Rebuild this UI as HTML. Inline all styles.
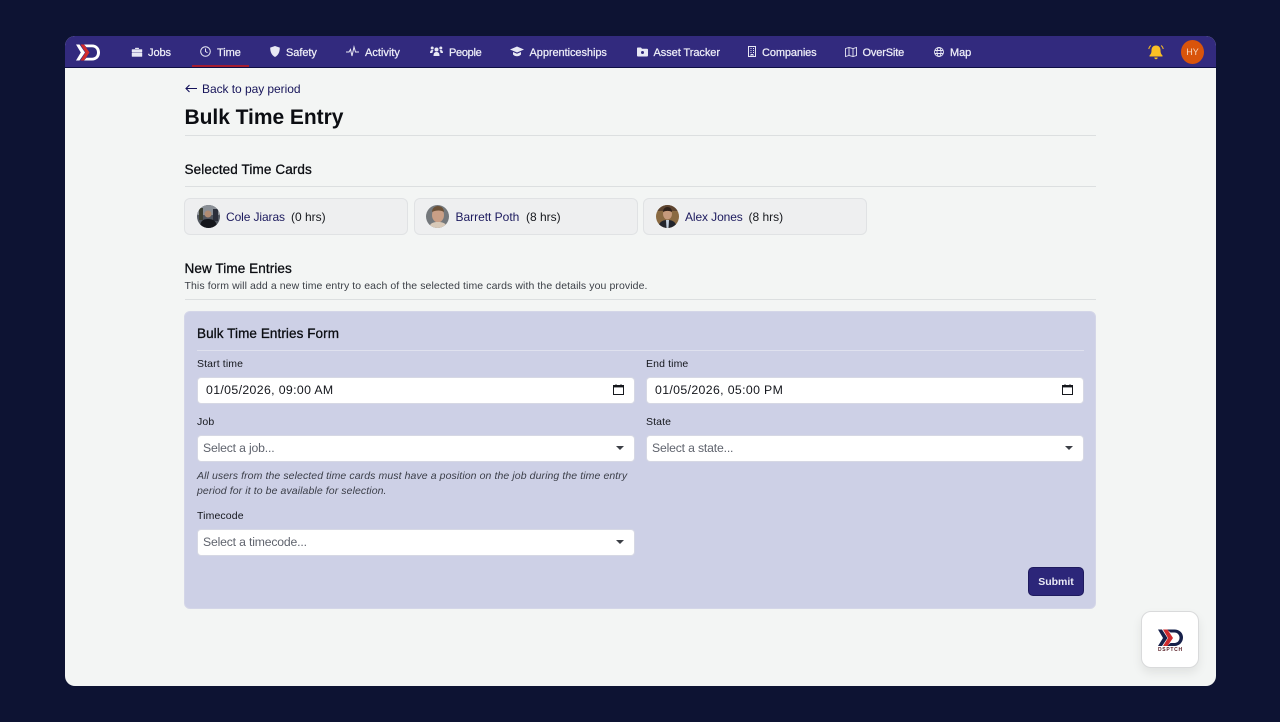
<!DOCTYPE html>
<html><head><meta charset="utf-8"><style>
*{box-sizing:border-box}
html,body{margin:0;padding:0}
body{width:1280px;height:722px;background:#0d1333;font-family:"Liberation Sans",sans-serif;position:relative;overflow:hidden;color:#0c0f14}
.a{position:absolute;white-space:nowrap}
#page{position:absolute;left:65px;top:36px;width:1151px;height:650px;background:#f3f5f4;border-radius:10px;overflow:hidden}
#nav{position:absolute;left:65px;top:36px;width:1151px;height:32px;background:#322a7e;border-radius:10px 10px 0 0;border-bottom:1px solid #0e0e45}
.n{position:absolute;top:47px;font-size:11px;line-height:12px;font-weight:400;color:#eeeef8;white-space:nowrap;letter-spacing:-.06px;-webkit-text-stroke:.25px #eeeef8}
svg.i{position:absolute;overflow:visible}
.hr{position:absolute;height:1px;background:#dcdfe0}
.card{position:absolute;top:198px;width:224px;height:37px;background:#eeeff0;border:1px solid #e0e2e4;border-radius:6px}
.av{position:absolute;top:205px;width:23px;height:23px;border-radius:50%;overflow:hidden}
.nm{position:absolute;top:210px;font-size:12px;line-height:15px;color:#1c1a5e;white-space:nowrap;letter-spacing:-.1px}
.hrs{position:absolute;top:210px;font-size:12px;line-height:15px;color:#16181d;white-space:nowrap}
.lab{position:absolute;font-size:10.5px;line-height:12px;color:#14161c;white-space:nowrap;letter-spacing:.12px}
.inp{position:absolute;width:437.5px;height:27px;background:#fff;border:1px solid #d6d8e4;border-radius:4px}
.val{position:absolute;font-size:12.3px;line-height:15px;color:#14161c;white-space:nowrap;letter-spacing:.36px}
.ph{position:absolute;font-size:12.2px;line-height:15px;color:#5f636d;white-space:nowrap;letter-spacing:-.16px}
.car{position:absolute;width:0;height:0;border-left:4px solid transparent;border-right:4px solid transparent;border-top:4px solid #3c3f46}
</style></head><body>
<div id="page"></div>
<div id="nav"></div>
<div class="a" style="left:192px;top:65px;width:57px;height:2px;background:#a51c30"></div>

<!-- logo -->
<svg class="i" style="left:76px;top:44px" width="24" height="17" viewBox="0 0 24 17">
<path d="M8 .5h8c5 0 8 3.500 8 8s-3 8-8 8H8l2.500-2.800h5.500c3.200 0 5-2.200 5-5.200s-1.800-5.200-5-5.200h-5.500z" fill="#fff"/>
<path d="M0 .5h3.500L9 8.500 3.500 16.500H0l4.800-8z" fill="#fff"/>
<path d="M4.500 .5h3.500l5.500 8-5.500 8H4.500l5-8z" fill="#d32b2b"/>
</svg>

<!-- Jobs icon -->
<svg class="i" style="left:132px;top:47px" width="10" height="10" viewBox="0 0 10 10"><path d="M3.300 2V1h3.400v1M0 2.500h10V5H0zM0 5.800h10v3.700H0z" fill="#e8e8f4" stroke="#e8e8f4" stroke-width=".4"/></svg>
<div class="n" style="left:148px">Jobs</div>
<!-- Time icon -->
<svg class="i" style="left:200px;top:46px" width="11" height="11" viewBox="0 0 11 11" fill="none" stroke="#e8e8f4" stroke-width="1"><circle cx="5.500" cy="5.500" r="4.800"/><path d="M5.500 2.500v3l2 1.200"/></svg>
<div class="n" style="left:217px">Time</div>
<!-- Safety -->
<svg class="i" style="left:270px;top:46px" width="10" height="11" viewBox="0 0 10 11"><path d="M5 0l4.800 1.600c0 4.400-1.400 7.400-4.800 9.400C1.600 9 .2 6 .2 1.600z" fill="#e8e8f4"/></svg>
<div class="n" style="left:286px">Safety</div>
<!-- Activity -->
<svg class="i" style="left:346px;top:46px" width="13" height="11" viewBox="0 0 13 11" fill="none" stroke="#e8e8f4" stroke-width="1"><path d="M0 6h3l1.500-2.500L6 10l2-9 1.500 5H13"/></svg>
<div class="n" style="left:365px;letter-spacing:0">Activity</div>
<!-- People -->
<svg class="i" style="left:430px;top:46px" width="13" height="11" viewBox="0 0 13 11" fill="#e8e8f4"><circle cx="6.500" cy="3.500" r="2"/><circle cx="2.200" cy="2" r="1.500"/><circle cx="10.800" cy="2" r="1.500"/><path d="M3.500 10c0-3 1-4 3-4s3 1 3 4zM0 7c0-2 1-3 2.200-3 .5 0 1 .2 1.300.5C2.800 5.200 2.500 6 2.400 7zM13 7c0-2-1-3-2.200-3-.5 0-1 .2-1.300.5.700.7 1 1.500 1.100 2.500z"/></svg>
<div class="n" style="left:449px;letter-spacing:-.3px">People</div>
<!-- Apprenticeships -->
<svg class="i" style="left:510px;top:46px" width="14" height="11" viewBox="0 0 14 11" fill="#e8e8f4"><path d="M7 .5L14 3.500 7 6.500 0 3.500z"/><path d="M3 6v2.500C4 9.700 5.500 10.300 7 10.300s3-.6 4-1.800V6L7 7.700z"/></svg>
<div class="n" style="left:529.500px">Apprenticeships</div>
<!-- Asset tracker -->
<svg class="i" style="left:637px;top:47px" width="11" height="10" viewBox="0 0 11 10"><path d="M0 1.500C0 .8.400.5 1 .5h3l1 1.200h5c.6 0 1 .4 1 1V8.500c0 .6-.4 1-1 1H1c-.6 0-1-.4-1-1z" fill="#e8e8f4"/><circle cx="5.500" cy="5.500" r="1.500" fill="#322a7e"/></svg>
<div class="n" style="left:653.500px">Asset Tracker</div>
<!-- Companies -->
<svg class="i" style="left:748px;top:46px" width="9" height="11" viewBox="0 0 9 11" fill="none" stroke="#e8e8f4"><rect x=".5" y=".5" width="7" height="10"/><path d="M2.500 2.500h1M5 2.500h1M2.500 4.500h1M5 4.500h1M2.500 6.500h1M5 6.500h1M3 10.500V8.500h2v2" stroke-width=".9"/></svg>
<div class="n" style="left:762px;letter-spacing:-.12px">Companies</div>
<!-- OverSite -->
<svg class="i" style="left:845px;top:47px" width="12" height="10" viewBox="0 0 12 10" fill="none" stroke="#e8e8f4" stroke-width=".9"><path d="M.5 1.500L4 .5l4 1 3.500-1v8L8 9.500l-4-1-3.500 1zM4 .5v8M8 1.500v8"/></svg>
<div class="n" style="left:862.500px;letter-spacing:-.15px">OverSite</div>
<!-- Map -->
<svg class="i" style="left:934px;top:47px" width="10" height="10" viewBox="0 0 10 10" fill="none" stroke="#e8e8f4" stroke-width=".9"><circle cx="5" cy="5" r="4.500"/><ellipse cx="5" cy="5" rx="2" ry="4.500"/><path d="M.5 3.500h9M.5 6.500h9"/></svg>
<div class="n" style="left:950px">Map</div>

<!-- bell -->
<svg class="i" style="left:1148px;top:44px" width="16" height="16" viewBox="0 0 16 16"><path d="M8 1.500c2.800 0 4.500 2 4.500 4.800 0 2.500.5 3.800 2 5.200v1H1.500v-1c1.500-1.400 2-2.700 2-5.200C3.500 3.500 5.200 1.500 8 1.500z" fill="#fbbf24"/><path d="M6.300 13.500h3.400c0 1-.7 1.700-1.700 1.700s-1.700-.7-1.700-1.700z" fill="#fbbf24"/><path d="M2.800 1.500C1.600 2.500 1 3.700.8 5.100M13.200 1.500c1.200 1 1.800 2.200 2 3.600" fill="none" stroke="#fbbf24" stroke-width="1"/></svg>
<!-- HY -->
<div class="a" style="left:1181px;top:40px;width:23px;height:24px;border-radius:50%;background:#d9540b;color:#f6d9c4;font-size:9px;line-height:24px;text-align:center">HY</div>

<!-- Header -->
<svg class="i" style="left:185px;top:84px" width="12" height="9" viewBox="0 0 12 9" fill="none" stroke="#14125a" stroke-width="1.100"><path d="M12 4.500H1M4.500 1L1 4.500 4.500 8"/></svg>
<div class="a" style="left:202px;top:82px;font-size:12px;line-height:15px;color:#17155a;letter-spacing:-.05px">Back to pay period</div>
<div class="a" style="left:184.500px;top:104px;font-size:21px;line-height:27px;font-weight:700;color:#0b0d12;letter-spacing:-.04px">Bulk Time Entry</div>
<div class="hr" style="left:185px;top:135px;width:911px"></div>

<div class="a" style="left:184.500px;top:161px;font-size:13.500px;line-height:17px;font-weight:400;color:#0b0d12;letter-spacing:.11px;-webkit-text-stroke:.3px #0b0d12">Selected Time Cards</div>
<div class="hr" style="left:185px;top:186px;width:911px"></div>

<!-- Cards -->
<div class="card" style="left:184px"></div>
<div class="card" style="left:414px;width:223.500px"></div>
<div class="card" style="left:643px"></div>

<div class="av" style="left:197px"><svg width="23" height="23" viewBox="0 0 23 23"><rect width="23" height="23" fill="#50565f"/><rect y="0" width="23" height="10" fill="#8a8f96"/><rect x="2" y="3" width="4" height="12" fill="#3b3f33"/><rect x="16" y="4" width="5" height="12" fill="#2b2f3a"/><circle cx="11" cy="9" r="3.500" fill="#b08c72"/><path d="M3 23c0-7 3-9 8-9s9 2 9 9z" fill="#15171c"/></svg></div>
<div class="nm" style="left:226px">Cole Jiaras</div>
<div class="hrs" style="left:291px">(0 hrs)</div>

<div class="av" style="left:426px"><svg width="23" height="23" viewBox="0 0 23 23"><rect width="23" height="23" fill="#74787c"/><ellipse cx="12" cy="10" rx="6" ry="7.500" fill="#c99f86"/><path d="M6 7c0-4 3-6 6-6s6 2 6 6c-3-2-8-2-12 0z" fill="#6b5138"/><path d="M3 23c1-5 4-6 9-6s8 1 9 6z" fill="#d8c9b8"/></svg></div>
<div class="nm" style="left:455.500px;letter-spacing:-.02px">Barrett Poth</div>
<div class="hrs" style="left:526px">(8 hrs)</div>

<div class="av" style="left:656px"><svg width="23" height="23" viewBox="0 0 23 23"><rect width="23" height="23" fill="#8a6a42"/><rect x="0" y="0" width="23" height="6" fill="#5d4430"/><ellipse cx="11.500" cy="9" rx="4.500" ry="5.500" fill="#c69a7c"/><path d="M7 7c0-3 2-5 4.500-5S16 4 16 7c-3-1.500-6-1.500-9 0z" fill="#2f2119"/><path d="M2 23c1-6 4-8 9.500-8s8.500 2 9.500 8z" fill="#22242b"/><path d="M10 15h3l-.5 8h-2z" fill="#c5d0de"/></svg></div>
<div class="nm" style="left:685px">Alex Jones</div>
<div class="hrs" style="left:748.500px">(8 hrs)</div>

<!-- New time entries -->
<div class="a" style="left:184.500px;top:260px;font-size:13.500px;line-height:17px;color:#0b0d12;letter-spacing:.1px;-webkit-text-stroke:.3px #0b0d12">New Time Entries</div>
<div class="a" style="left:184.500px;top:280px;font-size:10.500px;line-height:13px;color:#3c4047;letter-spacing:.09px">This form will add a new time entry to each of the selected time cards with the details you provide.</div>
<div class="hr" style="left:185px;top:299px;width:911px"></div>

<!-- Form panel -->
<div class="a" style="left:184px;top:311px;width:912px;height:298px;background:#cdd0e6;border:1px solid #d4d6e8;border-radius:6px"></div>
<div class="a" style="left:197px;top:325px;font-size:13.500px;line-height:17px;color:#0b0d12;letter-spacing:.08px;-webkit-text-stroke:.3px #0b0d12">Bulk Time Entries Form</div>
<div class="a" style="left:197px;top:350px;width:887px;height:1px;background:#dfe1ee"></div>

<div class="lab" style="left:197px;top:358px">Start time</div>
<div class="inp" style="left:197px;top:377px"></div>
<div class="val" style="left:206px;top:383px">01/05/2026, 09:00 AM</div>
<svg class="i" style="left:613px;top:384px" width="11" height="11" viewBox="0 0 11 11" fill="none" stroke="#16181d" stroke-width="1"><rect x=".5" y="1.500" width="10" height="9"/><path d="M.5 2.700h10" stroke-width="1.400"/><path d="M3 .2v1.500M8 .2v1.500"/></svg>

<div class="lab" style="left:646px;top:358px">End time</div>
<div class="inp" style="left:646px;top:377px"></div>
<div class="val" style="left:655px;top:383px">01/05/2026, 05:00 PM</div>
<svg class="i" style="left:1062px;top:384px" width="11" height="11" viewBox="0 0 11 11" fill="none" stroke="#16181d" stroke-width="1"><rect x=".5" y="1.500" width="10" height="9"/><path d="M.5 2.700h10" stroke-width="1.400"/><path d="M3 .2v1.500M8 .2v1.500"/></svg>

<div class="lab" style="left:197px;top:416px">Job</div>
<div class="inp" style="left:197px;top:435px"></div>
<div class="ph" style="left:203px;top:441px">Select a job...</div>
<div class="car" style="left:616px;top:446px"></div>

<div class="lab" style="left:646px;top:416px">State</div>
<div class="inp" style="left:646px;top:435px"></div>
<div class="ph" style="left:652px;top:441px">Select a state...</div>
<div class="car" style="left:1065px;top:446px"></div>

<div class="a" style="left:197px;top:469px;width:440px;font-size:10.500px;line-height:14.500px;font-style:italic;color:#3b3e48;letter-spacing:.09px">All users from the selected time cards must have a position on the job during the time entry<br>period for it to be available for selection.</div>

<div class="lab" style="left:197px;top:510px">Timecode</div>
<div class="inp" style="left:197px;top:529px"></div>
<div class="ph" style="left:203px;top:535px">Select a timecode...</div>
<div class="car" style="left:616px;top:540px"></div>

<div class="a" style="left:1028px;top:567px;width:56px;height:29px;background:#2c2679;border:1px solid #1e1a5e;border-radius:5px;color:#e9e9f5;font-size:10.500px;font-weight:700;line-height:28px;text-align:center">Submit</div>

<!-- Floating button -->
<div class="a" style="left:1141px;top:611px;width:58px;height:57px;background:#fff;border:1px solid #d9dadb;border-radius:10px;box-shadow:0 5px 10px rgba(0,0,0,.08)"></div>
<svg class="i" style="left:1158px;top:629px" width="26" height="18" viewBox="0 0 26 18">
<path d="M9 .5h7.500c5 0 8.500 3.500 8.500 8s-3.500 8.500-8.500 8.500H9l3.500-3h4c3 0 5-2.300 5-5.200S19.500 3.500 16.500 3.500h-4z" fill="#16204a"/>
<path d="M0 .5h4L9.500 9 4 17H0l5-8z" fill="#16204a"/>
<path d="M5 .5h4.500L15 9l-5.500 8H5l5-8z" fill="#cf2a2e"/>
</svg>
<div class="a" style="left:1158px;top:647px;font-size:5px;line-height:6px;font-weight:700;color:#5a2028;letter-spacing:.7px">DSPTCH</div>
</body></html>
